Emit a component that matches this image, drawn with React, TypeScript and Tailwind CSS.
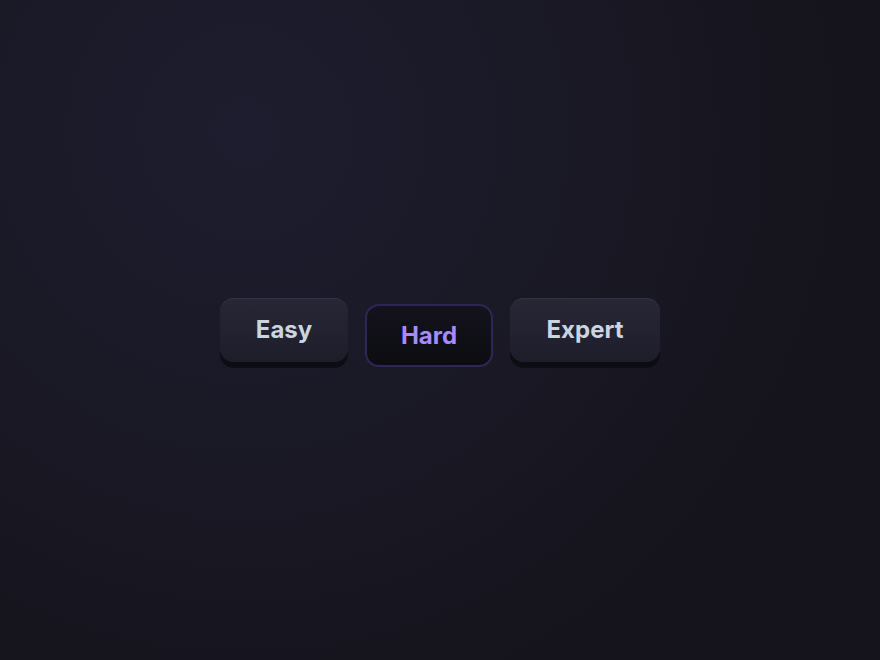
import React from "react";

export default function App() {
  return (
    <div
      className="w-[880px] h-[660px] flex items-center justify-center pt-[5px] bg-[#16151e] bg-[radial-gradient(circle_at_28%_20%,#1e1d2f_0%,#1a1926_35%,#15141c_75%)]"
      style={{ fontFamily: "Inter, 'Noto Sans', sans-serif" }}
    >
      <div className="flex items-start gap-[17px]">
        <button className="w-[128px] h-[64px] rounded-[14px] bg-gradient-to-b from-[#282737] to-[#1e1d2a] text-[#cbd5e1] text-[24px] font-bold leading-none shadow-[inset_0_1px_0_rgba(255,255,255,0.06),0_6px_0_#0e0d14]">
          Easy
        </button>
        <button className="w-[128px] h-[63px] mt-[6px] rounded-[14px] border-2 border-[#2c2756] bg-gradient-to-b from-[#14131c] to-[#0c0c12] text-[#a78bfa] text-[24px] font-bold leading-none">
          Hard
        </button>
        <button className="w-[150px] h-[64px] rounded-[14px] bg-gradient-to-b from-[#282737] to-[#1e1d2a] text-[#cbd5e1] text-[24px] font-bold leading-none shadow-[inset_0_1px_0_rgba(255,255,255,0.06),0_6px_0_#0e0d14]">
          Expert
        </button>
      </div>
    </div>
  );
}
